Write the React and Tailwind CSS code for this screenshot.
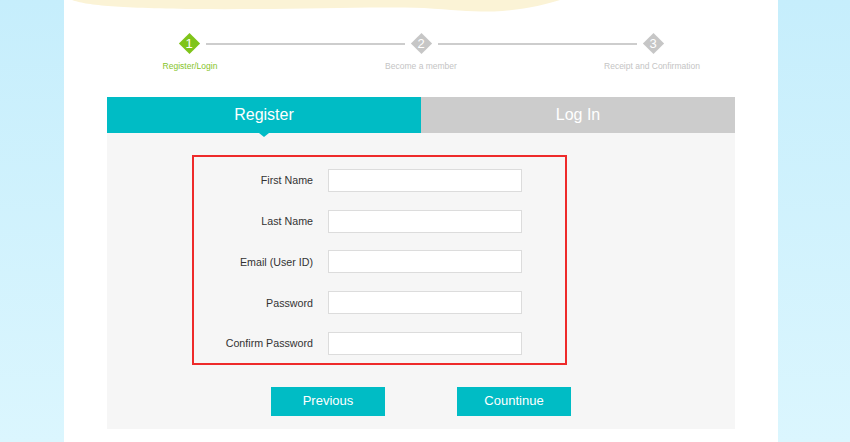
import React from "react";

function Diamond({ n, active }) {
  return (
    <div className="relative w-[21px] h-[21px] flex items-center justify-center">
      <div
        className={`absolute w-[15px] h-[15px] rotate-45 ${
          active ? "bg-[#7fc41a]" : "bg-[#c6c6c6]"
        }`}
      />
      <span className="relative text-white text-[13px] leading-none">{n}</span>
    </div>
  );
}

function Row({ label }) {
  return (
    <div className="flex items-center h-[23px]">
      <div className="w-[119px] text-right text-[10.7px] text-[#333]">{label}</div>
      <div className="ml-[15px] w-[194px] h-[23px] bg-white border border-[#dcdcdc]" />
    </div>
  );
}

export default function App() {
  return (
    <div
      className="w-[850px] h-[442px] overflow-hidden bg-gradient-to-b from-[#c6eefc] to-[#dbf6fe] pl-[64px]"
      style={{ fontFamily: '"Liberation Sans", Arial, sans-serif' }}
    >
      <div className="relative w-[714px] h-[442px] bg-white">
        <svg
          className="absolute left-0 top-0"
          width="714"
          height="16"
          viewBox="0 0 714 16"
        >
          <path
            d="M8 0 C 22 5, 50 8, 130 9 C 220 10, 300 6, 360 8 C 390 10, 410 12, 430 11.5 C 460 10, 480 5, 496 0 Z"
            fill="#fbf3d6"
          />
        </svg>

        <div className="pt-[33px] flex justify-center items-center">
          <Diamond n="1" active />
          <div className="mx-[6px] w-[199px] h-[2px] bg-[#cdcdcd]" />
          <Diamond n="2" />
          <div className="mx-[6px] w-[199px] h-[2px] bg-[#cdcdcd]" />
          <Diamond n="3" />
        </div>
        <div className="mt-[6px] flex justify-center text-[8.5px] leading-[12px]">
          <div className="w-[231px] text-center text-[#86c42a] font-medium">Register/Login</div>
          <div className="w-[231px] text-center text-[#c4c4c4]">Become a member</div>
          <div className="w-[231px] text-center text-[#c4c4c4]">Receipt and Confirmation</div>
        </div>

        <div className="mt-[25px] mx-[43px]">
          <div className="flex h-[36px]">
            <div className="relative flex-1 bg-[#00bcc5] flex items-center justify-center text-white text-[16px]">
              Register
              <div className="absolute left-1/2 -translate-x-1/2 top-full w-0 h-0 border-l-[5px] border-r-[5px] border-t-[4px] border-l-transparent border-r-transparent border-t-[#00bcc5]" />
            </div>
            <div className="flex-1 bg-[#cccccc] flex items-center justify-center text-white text-[16px]">
              Log In
            </div>
          </div>
          <div className="bg-[#f6f6f6] h-[296px] pt-[22px]">
            <div className="ml-[85px] w-[375px] h-[210px] border-2 border-[#ee2a2a] pt-[12px] flex flex-col gap-[17.7px]">
              <Row label="First Name" />
              <Row label="Last Name" />
              <Row label="Email (User ID)" />
              <Row label="Password" />
              <Row label="Confirm Password" />
            </div>
            <div className="mt-[21.5px] flex justify-center gap-[72px]">
              <div className="w-[114px] h-[29px] bg-[#00bcc5] flex items-center justify-center text-white text-[13px]">
                Previous
              </div>
              <div className="w-[114px] h-[29px] bg-[#00bcc5] flex items-center justify-center text-white text-[13px]">
                Countinue
              </div>
            </div>
          </div>
        </div>
      </div>
    </div>
  );
}
